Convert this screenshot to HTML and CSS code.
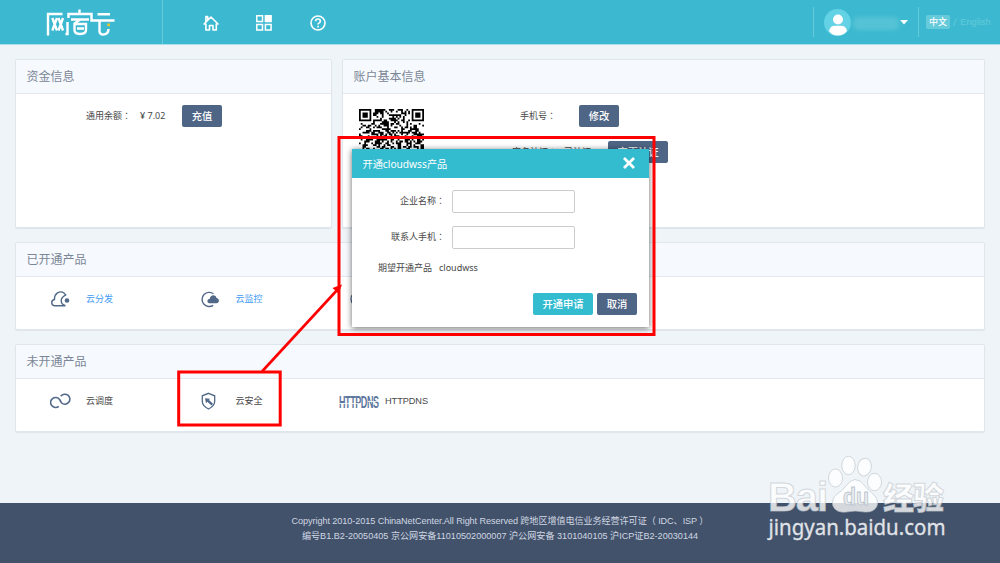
FILE: index.html
```html
<!DOCTYPE html>
<html lang="zh-CN">
<head>
<meta charset="utf-8">
<title>网宿云</title>
<link rel="stylesheet" href="styles.css">
</head>
<body>
<div class="page">
  <header class="topbar">
    <div class="brand">
      <svg class="logo" width="70" height="30" viewBox="45 8 70 30">
        <g fill="none" stroke="#fff" stroke-width="2.400">
          <path d="M48 35.500V14H62.500M52.300 18L57 30.500M57 18L52.300 30.500M58.500 18L63 30.500M63 18L58.500 30.500"/>
          <path d="M67.500 22V34H65.500M68.500 18V14H91.500V20.500H114.500M79.500 9.500V14M71 19.500H89"/>
          <path d="M80 19.500L74.500 23.500V30Q74.500 34 80 34Q86 34 86 30V24H75M77 28.500H84"/>
          <path d="M97.500 14.300H110M99.500 20.500V31Q99.500 34.500 103.500 34.500Q108.500 34 108.500 29"/>
        </g>
        <rect x="107.300" y="23.500" width="2.700" height="2.700" fill="#e8c630"/>
      </svg>
    </div>
    <nav class="nav">
      <svg width="16" height="16" viewBox="0 0 16 16" fill="none" stroke="#fff" stroke-width="1.600" stroke-linejoin="round"><path d="M2.900 9H1L8 2l7 7h-1.700v6H10v-4.500H6.500V15H2.900zM2.900 6.500V1.500H4.700V4.500"/></svg>
      <svg width="16" height="16" viewBox="0 0 16 16" fill="none" stroke="#fff" stroke-width="1.500"><path d="M.8.8h5.700v5.700H.8zM.8 9.400h5.700v5.700H.8zM9.400 9.400h5.700v5.700H9.400z"/><path fill="#fff" d="M9.400.8h5.700v5.700H9.400z"/></svg>
      <svg width="16" height="16" viewBox="0 0 16 16" fill="none" stroke="#fff" stroke-width="1.600"><circle cx="8" cy="8" r="7"/><path d="M5.600 6.200Q5.700 4 8 4T10.400 6.100Q10.400 7.200 9.200 7.900Q8 8.500 8 9.600M8 10.800v1.600"/></svg>
    </nav>
    <div class="account">
      <svg class="avatar" width="27" height="27" viewBox="0 0 27 27"><circle cx="13.500" cy="13.500" r="13.500" fill="#63d2e4"/><circle cx="14" cy="10.500" r="5" fill="#fff"/><path d="M5 22Q6 16.700 11 16.700H17Q22 16.700 23 22Q19.500 26.500 13.700 26.500T5 22Z" fill="#fff"/></svg>
      <span class="username"></span>
      <svg class="caret" width="8" height="5" viewBox="0 0 8 5"><path d="M0 0h8L4 4.500z" fill="#fff"/></svg>
    </div>
    <div class="lang"><span class="lang-on">中文</span><span class="slash">/</span><span class="lang-off">English</span></div>
  </header>

  <main class="content">
    <div class="row-top">
      <section class="panel funds">
        <h2>资金信息</h2>
        <div class="line funds-line"><span class="bal-label">通用余额<i lang="zh-TW">：</i></span><span class="bal">¥ 7.02</span><button class="btn">充值</button></div>
      </section>
      <section class="panel profile">
        <h2>账户基本信息</h2>
        <div class="profile-body">
          <svg class="qr" id="qr" width="65" height="65" viewBox="0 0 37 37"></svg>
          <div class="fields">
            <div class="line phone"><span>手机号<i lang="zh-TW">：</i></span><button class="btn">修改</button></div>
            <div class="line verify"><span class="v-label">实名认证<i lang="zh-TW">：</i></span><span class="v-state">已认证</span><button class="btn">变更认证</button></div>
          </div>
        </div>
      </section>
    </div>

    <section class="panel opened">
      <h2>已开通产品</h2>
      <div class="products">
        <div class="product"><svg class="picon" width="22" height="18" viewBox="0 0 22 18" fill="none" stroke="#516888" stroke-width="1.400"><path d="M15.500 15.700H4.500Q1.700 15.500 1.700 12.600Q1.800 10 4.500 9.500Q4.200 5 7.500 2.800Q11 .8 14 3Q15.500 4.200 15.500 6M16.300 4.600Q11.200 7 11.200 10.800T15.500 15.600"/><circle cx="17" cy="10.500" r="2.300" fill="#516888" stroke="none"/></svg><a class="link">云分发</a></div>
        <div class="product"><svg class="picon" width="22" height="18" viewBox="0 0 22 18"><path d="M13.500 3.800A7.100 7.100 0 1 0 13.200 15.300" fill="none" stroke="#516888" stroke-width="1.400"/><path d="M9 13.200Q7 12.500 7.400 10.400Q8 9.100 9.600 9.100Q10.300 5.200 13.500 5.200Q16.100 5.400 16.600 8Q19.200 8.700 18.900 11.200Q18.400 13.200 16.400 13.200Z" fill="#516888"/></svg><a class="link">云监控</a></div>
        <div class="product"><svg class="picon" width="22" height="18" viewBox="0 0 22 18"><circle cx="9" cy="9" r="7" fill="none" stroke="#516888" stroke-width="1.300"/></svg></div>
      </div>
    </section>

    <section class="panel unopened">
      <h2>未开通产品</h2>
      <div class="products">
        <div class="product"><svg class="picon" width="22" height="18" viewBox="0 0 22 18" fill="none" stroke="#516888" stroke-width="1.600"><path d="M8.800 14.300A5 5 0 1 1 9.600 7.500L11.600 11A5 5 0 1 0 10.800 4.300"/></svg><span>云调度</span></div>
        <div class="product"><svg class="picon" width="22" height="18" viewBox="0 0 22 18"><path d="M8.500 1.300L14.700 3.800V9.500Q14.500 14 8.500 17Q2.500 14 2.300 9.500V3.800Z" fill="none" stroke="#516888" stroke-width="1.300"/><path d="M5 6.200L10 6.700L9 8L13 11.700L11.500 13.500L7.300 9.800L6 11.200Z" fill="#516888"/></svg><span>云安全</span></div>
        <div class="product"><svg class="dns" width="41" height="14" viewBox="0 0 41 14"><text transform="translate(0 13) scale(1 1.850)" textLength="40">HTTPDNS</text><path d="M0 8.500H22M29 6.500H41" stroke="#fff" stroke-width=".8"/></svg><span class="dns-name">HTTPDNS</span></div>
      </div>
    </section>
  </main>

  <footer class="footer">
    <p class="copy">Copyright 2010-2015 ChinaNetCenter.All Right Reserved 跨地区增值电信业务经营许可证（ IDC、ISP ）</p>
    <p class="icp">编号B1.B2-20050405 京公网安备11010502000007 沪公网安备 3101040105 沪ICP证B2-20030144</p>
  </footer>

  <div class="dialog">
    <div class="dialog-head"><span>开通cloudwss产品</span><svg width="12" height="12" viewBox="0 0 12 12"><path d="M1 1l10 10M11 1L1 11" stroke="#fff" stroke-width="2.800"/></svg></div>
    <div class="form">
      <label class="field"><span>企业名称<i lang="zh-TW">：</i></span><input type="text"></label>
      <label class="field"><span>联系人手机<i lang="zh-TW">：</i></span><input type="text"></label>
      <div class="wish"><span>期望开通产品</span><span class="wish-value">cloudwss</span></div>
      <div class="actions"><button class="btn primary">开通申请</button><button class="btn">取消</button></div>
    </div>
  </div>

  <svg class="overlay" width="1000" height="563" viewBox="0 0 1000 563">
    <g fill="none" stroke="#f00" stroke-width="3">
      <rect x="339" y="137.500" width="315" height="197"/>
      <rect x="178.700" y="372" width="101.500" height="53"/>
      <path d="M262 371.500L339 288" stroke-width="2.600"/>
    </g>
    <path d="M342 284.500L332.500 288L338.500 293.500Z" fill="#f00"/>
    <g class="mark">
      <ellipse cx="835.500" cy="478" rx="7" ry="9"/><ellipse cx="848.500" cy="465.500" rx="6.700" ry="9.200"/><ellipse cx="864.500" cy="467" rx="6.800" ry="9" transform="rotate(10 864 467)"/><ellipse cx="874.500" cy="482" rx="7" ry="8.700"/>
      <path d="M855 479.500Q861 480 865 486Q868 490 873 494Q879 499.500 877 506Q874 512.500 865 512Q855 510 846 512Q836 513 833 506Q831 499 837 494Q842 491 846 486Q850 480 855 479.500Z"/>
      <text class="bai" x="768" y="511" textLength="60">Bai</text>
      <text class="du" x="843" y="505" textLength="26" lengthAdjust="spacingAndGlyphs">du</text>
      <text class="jy" x="883" y="508.500" textLength="61">经验</text>
      <text class="url" x="768.500" y="535" textLength="177" lengthAdjust="spacingAndGlyphs">jingyan.baidu.com</text>
    </g>
  </svg>
</div>
<script src="qr.js"></script>
</body>
</html>
```
FILE: styles.css
```css
* { box-sizing: border-box; }
body { margin: 0; background: #eff4f8; font-family: "Noto Sans", "Noto Sans CJK SC", sans-serif; font-size: 9px; color: #484848; }
.page { position: relative; width: 1000px; height: 563px; overflow: hidden; display: flex; flex-direction: column; }
h2, p { margin: 0; font-weight: 400; }
svg { display: block; flex: none; }
span, a { white-space: nowrap; }
i { font-family: "Noto Sans CJK TC", sans-serif; font-style: normal; }

.topbar { height: 45px; flex: none; display: flex; align-items: center; background: #3cb9d0; border-bottom: 1px solid #a8deea; }
.brand { width: 163px; height: 44px; padding: 8px 0 0 45px; border-right: 1px solid #65cada; }
.nav { display: flex; gap: 37.500px; padding: 2px 0 0 39.500px; flex: 1; }
.account { display: flex; align-items: center; width: 106px; height: 30px; border-left: 1px solid #65cada; border-right: 1px solid #65cada; padding-left: 10px; }
.username { width: 46px; height: 13px; margin: 2px 0 0 2px; border-radius: 5px; background: #56c2d6; filter: blur(2px); }
.caret { margin-left: 1px; }
.lang { display: flex; align-items: center; width: 81px; padding-left: 7px; }
.lang-on { width: 24px; height: 14px; line-height: 13px; text-align: center; border-radius: 2px; background: #65cada; color: #fff; font-weight: 500; }
.slash { margin-left: 3px; color: #6accdc; }
.lang-off { margin-left: 4px; font: 9.200px "Liberation Sans", sans-serif; color: #65cada; }

.content { flex: none; height: 458px; padding: 14px 15px 0; }
.row-top { display: flex; gap: 10px; margin-bottom: 14px; }
.panel { background: #fff; border: 1px solid #e0e6ee; border-radius: 2px; box-shadow: 0 1px 1px #dfe5ea; }
.panel h2 { height: 34px; padding-left: 10.500px; line-height: 33px; font-size: 12px; color: #7b8796; background: #f6f9fe; border-bottom: 1px solid #e3e7f0; }
.funds { width: 317px; height: 169px; }
.profile { width: 643px; height: 169px; }
.line { display: flex; align-items: center; height: 22px; }
.line span { margin-top: -2px; }
.btn { height: 22px; padding: 0; width: 40px; border: 0; border-radius: 2px; background: #4f6585; color: #fff; font: 500 10.300px/20px "Noto Sans CJK SC", sans-serif; flex: none; }
.funds-line { margin-top: 11px; padding-left: 70px; }
.bal-label { width: 54px; }
.bal { width: 42px; }
.profile-body { display: flex; padding: 11px 0 0 16px; }
.qr { margin-top: 4px; margin-right: -1px; }
.phone { padding-left: 97px; }
.phone span { width: 59px; }
.verify { margin-top: 14px; padding-left: 89px; }
.v-label { width: 52px; }
.v-state { width: 44px; }

.opened { height: 88px; margin-bottom: 14px; }
.unopened { height: 88px; }
.products { display: flex; padding: 12px 0 0 34px; }
.product { display: flex; align-items: center; width: 149.500px; height: 20px; }
.product > span, .product > a { margin-top: -2px; }
.unopened .picon { margin-top: -1px; }
.picon { width: 22px; margin-right: 14px; }
.link { color: #3f9bf5; }
.dns { margin-left: -10px; margin-top: 1px; overflow: visible; }
.dns text { font: bold 9px "Liberation Sans", sans-serif; fill: #5c769c; }
.product > .dns-name { margin: -1px 0 0 5px; font: 9.200px "Liberation Sans", sans-serif; letter-spacing: -0.060px; }

.footer { flex: none; height: 60px; padding-top: 11px; background: #42526b; color: #d0d7e2; text-align: center; font: 9.100px/15px "Liberation Sans", "Noto Sans CJK SC", sans-serif; white-space: nowrap; }
.copy { letter-spacing: -0.070px; }

.dialog { position: absolute; left: 352px; top: 149px; width: 297px; height: 178px; background: #fff; box-shadow: 0 1px 6px rgba(0,0,0,.6); }
.dialog-head { height: 29px; display: flex; align-items: center; justify-content: space-between; padding: 0 14px 1px 10.500px; background: #33bbd0; color: #fff; font-size: 10.200px; }
.form { padding-top: 12px; }
.field { display: flex; align-items: center; height: 23px; margin-bottom: 13px; }
.field span { width: 100px; padding: 0 7px 2px 0; text-align: right; }
.field input { width: 123px; height: 23px; border: 1px solid #ccc; border-radius: 2px; background: #fff; }
.wish { display: flex; align-items: center; height: 15px; margin-top: -2px; padding-left: 26px; }
.wish-value { margin-left: 7px; }
.actions { display: flex; gap: 4px; margin-top: 18px; padding-left: 181px; }
.primary { width: 60px; background: #33bbd0; }
.verify .btn { width: 60px; }

.overlay { position: absolute; left: 0; top: 0; pointer-events: none; }
.mark { fill: rgba(255,255,255,.78); stroke: rgba(190,196,202,.65); stroke-width: 1; }
.bai { font: bold 40px "Liberation Sans", sans-serif; }
.du { font: bold 24px "Liberation Sans", sans-serif; fill: #e9edf0; stroke: #bfc6cf; }
.jy { font: 900 31px "Noto Sans CJK SC", sans-serif; }
.url { font: 22px "Noto Sans", sans-serif; fill: #e0e3e8; stroke: #e0e3e8; stroke-width: .3; }
```
FILE: qr.js
```js
// Fills the QR symbol with modules on a 37 x 37 grid.
const size = 37;
let seed = 20153;
const next = () => (seed = (seed * 1103515245 + 12345) % 2147483648) / 2147483648;
const corners = [[0, 0], [size - 7, 0], [0, size - 7]];
let d = "";
for (let y = 0; y < size; y++) {
  for (let x = 0; x < size; x++) {
    let on = next() > 0.48;
    for (const [cx, cy] of corners) {
      const ring = Math.max(Math.abs(x - cx - 3), Math.abs(y - cy - 3));
      if (ring <= 4) on = ring === 3 || ring <= 1;
    }
    if (on) d += `M${x} ${y}h1v1h-1z`;
  }
}
const modules = document.createElementNS("http://www.w3.org/2000/svg", "path");
modules.setAttribute("d", d);
document.getElementById("qr").append(modules);
```
